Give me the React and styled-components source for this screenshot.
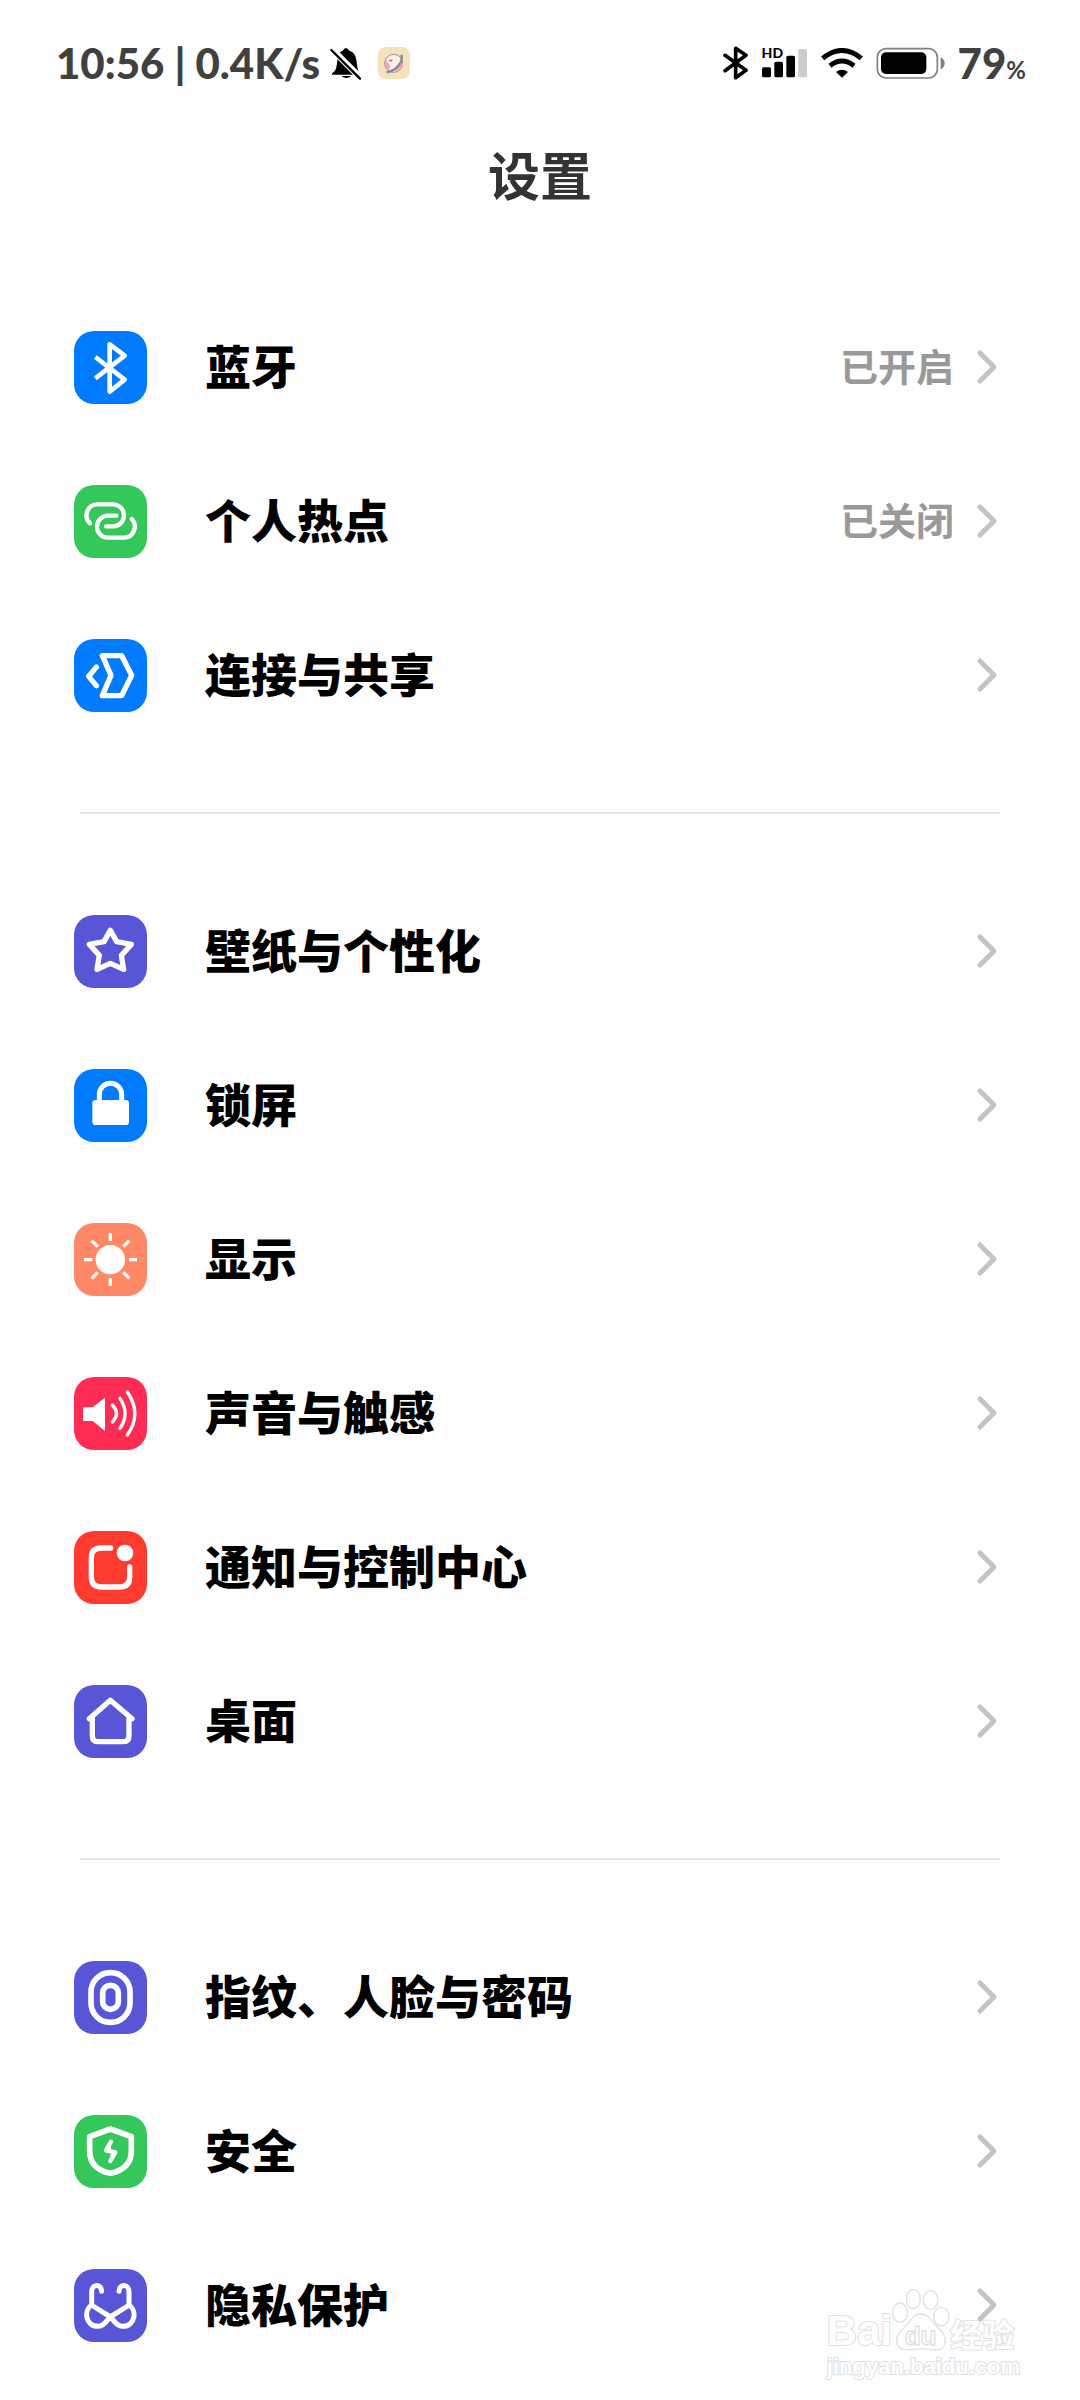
import styled, { createGlobalStyle } from "styled-components";

//every tile glyph is drawn on a 219 x 219 grid
const ICONS = {
    bluetooth: (
        <path strokeWidth="14" d="M64 78 L152 146 L107 182 V40 L152 74 L64 142" />
    ),
    hotspot: (
        <g strokeWidth="13" strokeLinecap="round">
            <path d="M48 115 A33 33 0 0 1 68 58 H117 A33 33 0 0 1 117 124 H96" />
            <path d="M127 92 H102 A33 33 0 0 0 102 158 H150 A33 33 0 0 0 173 102" />
        </g>
    ),
    share: (
        <g strokeWidth="16" strokeLinecap="round">
            <path d="M85 50 H143 L173 109 L143 170 H85 L111 109 Z" />
            <path d="M67 84 L44 112 L67 140" />
        </g>
    ),
    star: (
        <path strokeWidth="16" d="M109 46 L128 80 L172 88 L142 121 L149 163 L109 145 L69 163 L76 121 L46 88 L90 80 Z" />
    ),
    lock: (
        <g>
            <rect x="55" y="93" width="110" height="75" rx="10" fill="#fff" stroke="none" />
            <path strokeWidth="15" d="M76 96 V76 A33 33 0 0 1 143 76 V96" />
        </g>
    ),
    sun: (
        <g strokeWidth="10">
            <circle cx="109" cy="110" r="44" fill="#fff" stroke="none" />
            <path d="M109 30 V54 M109 165 V189 M30 110 H55 M165 110 H189" />
            <path d="M53 53 L71 71 M166 53 L148 71 M53 166 L71 148 M166 166 L148 148" />
        </g>
    ),
    sound: (
        <g strokeWidth="10" strokeLinecap="round">
            <path fill="#fff" stroke="none" d="M31 91 H56 L93 62 V162 L56 132 H31 Q27 132 27 128 V95 Q27 91 31 91 Z" />
            <path d="M115 84 Q140 110 115 135 M138 64 Q168 110 138 154 M160 45 Q205 110 160 174" />
        </g>
    ),
    notification: (
        <g strokeWidth="16" strokeLinecap="round">
            <path d="M110 51 H82 Q52 51 52 80 V138 Q52 168 82 168 H137 Q167 168 167 138 V108" />
            <circle cx="153" cy="66" r="25" fill="#fff" stroke="none" />
        </g>
    ),
    home: (
        <g strokeWidth="16" strokeLinecap="round">
            <path d="M46 101 L109 46 L174 101" />
            <path d="M55 100 V152 Q55 170 73 170 H147 Q165 170 165 152 V100" />
        </g>
    ),
    fingerprint: (
        <g strokeWidth="17">
            <rect x="51" y="35" width="117" height="149" rx="58" />
            <rect x="86" y="73" width="47" height="72" rx="23" />
        </g>
    ),
    shield: (
        <g>
            <path strokeWidth="17" d="M109 42 L172 65 V108 C172 150 142 168 109 175 C76 168 47 150 47 108 V65 Z" />
            <path strokeWidth="13" strokeLinecap="round" fill="#fff" d="M111 80 L96 106 L124 112 L109 138" />
        </g>
    ),
    privacy: (
        <g strokeWidth="15" strokeLinecap="round">
            <path d="M83 67 C83 44 53 42 53 70 V108 C28 124 34 172 72 172 C94 172 98 150 113 141 L166 108" />
            <path d="M135 67 C135 44 165 42 165 70 V108 C190 124 184 172 146 172 C124 172 120 150 105 141 L52 108" />
        </g>
    ),
};

const GROUPS = [
    [
        { icon: "bluetooth", color: "#007aff", label: "蓝牙", value: "已开启" },
        { icon: "hotspot", color: "#34c759", label: "个人热点", value: "已关闭" },
        { icon: "share", color: "#007aff", label: "连接与共享" },
    ],
    [
        { icon: "star", color: "#5856d6", label: "壁纸与个性化" },
        { icon: "lock", color: "#007aff", label: "锁屏" },
        { icon: "sun", color: "#ff8966", label: "显示" },
        { icon: "sound", color: "#ff2d55", label: "声音与触感" },
        { icon: "notification", color: "#ff3b30", label: "通知与控制中心" },
        { icon: "home", color: "#5856d6", label: "桌面" },
    ],
    [
        { icon: "fingerprint", color: "#5856d6", label: "指纹、人脸与密码" },
        { icon: "shield", color: "#34c759", label: "安全" },
        { icon: "privacy", color: "#5856d6", label: "隐私保护" },
    ],
];

const StatusBar = () => {
    return (
        <Bar>
            <BarSide>
                <BarText>10:56 | 0.4K/s</BarText>
                <svg width="32" height="34" viewBox="0 0 96 102">
                    <path d="M15 74 C26 58 16 22 38 14 Q48 -2 58 14 C88 24 74 56 90 86 H6 Q4 82 15 74 Z M34 90 H64 Q50 102 34 90 Z" />
                    <path d="M2 6 L94 98" stroke="#fff" strokeWidth="19" />
                    <path d="M4 12 L90 98" stroke="#000" strokeWidth="7" strokeLinecap="round" />
                </svg>
                <AppBadge>
                    <svg width="32" height="32" viewBox="0 0 96 96">
                        <circle cx="47" cy="49" r="27" fill="#faf0e6" stroke="#a98890" strokeWidth="3" />
                        <path d="M23 38 L37 58 L32 70 Q18 60 23 38 Z M70 46 L75 50 Q72 68 56 72 L50 68 Z" fill="#f5a3ba" />
                        <path d="M26 76 Q54 72 68 46 Q74 32 70 23" fill="none" stroke="#85899c" strokeWidth="7" />
                        <path d="M34 39 Q38 45 43 38" fill="none" stroke="#b55a62" strokeWidth="4" />
                    </svg>
                </AppBadge>
            </BarSide>
            <BarSide $end>
                <svg width="26" height="34" viewBox="0 0 78 102">
                    <path d="M6 28 L69 73 L38 95 V7 L69 28 L6 74" fill="none" stroke="#000" strokeWidth="11" strokeLinejoin="round" strokeLinecap="round" />
                </svg>
                <Signal>
                    <HdMark>HD</HdMark>
                    <svg width="46" height="30" viewBox="0 0 138 90">
                        <rect x="0" y="58" width="27" height="30" rx="5" />
                        <rect x="37" y="41" width="26" height="47" rx="5" />
                        <rect x="73" y="23" width="26" height="65" rx="5" />
                        <rect x="109" y="3" width="26" height="85" rx="5" fill="#ccc" />
                    </svg>
                </Signal>
                <svg width="42" height="30" viewBox="0 0 126 90">
                    <g fill="none" stroke="#000" strokeWidth="15">
                        <path d="M5 31 Q63 -16 121 31" />
                        <path d="M27 53 Q63 25 99 53" />
                    </g>
                    <path d="M45 72 Q63 58 81 72 L63 89 Z" />
                </svg>
                <svg width="69" height="32" viewBox="0 0 207 96">
                    <rect x="4" y="5" width="180" height="88" rx="26" fill="none" stroke="#808080" strokeWidth="5" />
                    <rect x="15" y="16" width="136" height="65" rx="15" />
                    <path d="M194 30 Q206 38 206 49 Q206 60 194 68 Z" fill="#808080" />
                </svg>
                <BarText>79<Percent>%</Percent></BarText>
            </BarSide>
        </Bar>
    );
};

const SettingRow = ({ item }) => {
    return (
        <li>
            <RowLink href={"#" + item.icon}>
                <Tile $color={item.color} viewBox="0 0 219 219">
                    {ICONS[item.icon]}
                </Tile>
                <Label>{item.label}</Label>
                {item.value && <Value>{item.value}</Value>}
                <svg width="22" height="36" viewBox="0 0 22 36">
                    <path d="M4 4 L18 18 L4 32" fill="none" stroke="#c4c4c6" strokeWidth="5" strokeLinecap="round" strokeLinejoin="round" />
                </svg>
            </RowLink>
        </li>
    );
};

const Watermark = () => {
    return (
        <Mark>
            <MarkRow>
                <MarkText $size={42}>Bai</MarkText>
                <svg width="58" height="64" viewBox="0 0 174 192">
                    <g fill="#fff" stroke="#dedede" strokeWidth="4">
                        <ellipse cx="24" cy="74" rx="22" ry="29" />
                        <ellipse cx="64" cy="33" rx="21" ry="29" />
                        <ellipse cx="116" cy="36" rx="22" ry="28" />
                        <ellipse cx="148" cy="86" rx="23" ry="28" />
                        <path d="M86 78 C112 78 118 102 138 120 C174 150 160 186 134 186 C112 186 108 182 86 182 C64 182 54 188 34 184 C8 178 6 146 34 122 C54 104 60 78 86 78 Z" />
                        <text x="38" y="171" fontSize="78" fontFamily="Liberation Sans" fontWeight="700">du</text>
                    </g>
                </svg>
                <MarkText $size={32}>经验</MarkText>
            </MarkRow>
            <MarkText $size={22}>jingyan.baidu.com</MarkText>
        </Mark>
    );
};

const App = () => {
    return (
        <Page>
            <GlobalStyle />
            <StatusBar />
            <Title>设置</Title>
            <main>
                {GROUPS.map((group, index) => {
                    return (
                        <Group key={index}>
                            {group.map((item) => {
                                return <SettingRow key={item.icon} item={item} />;
                            })}
                        </Group>
                    );
                })}
            </main>
            <Watermark />
        </Page>
    );
};

const GlobalStyle = createGlobalStyle`
    * {
        box-sizing: border-box;
    }
    body {
        margin: 0;
        background-color: #fefefe;
        font-family: "Noto Sans CJK SC", sans-serif;
    }
`;

const Page = styled.div`
    position: relative;
    min-height: 100vh;
    padding-bottom: 18px;
`;

const Bar = styled.header`
    display: flex;
    justify-content: space-between;
    align-items: center;
    height: 126px;
    padding: 0 54px 0 56px;
`;

const BarSide = styled.div`
    display: flex;
    align-items: center;
    gap: ${(props) => (props.$end ? "13px" : "10px")};
`;

const BarText = styled.span`
    font-family: Lato, sans-serif;
    font-size: 42px;
    font-weight: 900;
    line-height: 48px;
    color: #404040;
    white-space: pre;
`;

const Percent = styled.small`
    font-size: 24px;
    font-weight: 700;
    line-height: 24px;
`;

const AppBadge = styled.span`
    display: flex;
    margin-left: 6px;
    border-radius: 8px;
    background-color: #f2e3bb;
`;

const Signal = styled.span`
    position: relative;
    display: flex;
`;

const HdMark = styled.span`
    position: absolute;
    top: -2px;
    left: 0;
    font-family: Lato, sans-serif;
    font-size: 14px;
    font-weight: 900;
    line-height: 14px;
    color: #000;
`;

const Title = styled.h1`
    margin: 0 0 68px;
    font-size: 52px;
    font-weight: 700;
    line-height: 96px;
    text-align: center;
    color: #333;
`;

const Group = styled.ul`
    margin: 0;
    padding: 0;
    list-style: none;
    & + &::before {
        content: "";
        display: block;
        height: 2px;
        margin: 60px 80px;
        background-color: #e4e4e4;
    }
`;

const RowLink = styled.a`
    display: flex;
    align-items: center;
    height: 154px;
    padding: 0 82px 0 74px;
    color: #000;
    text-decoration: none;
`;

const Tile = styled.svg`
    flex: none;
    width: 73px;
    height: 73px;
    margin-right: 58px;
    border-radius: 20px;
    background-color: ${(props) => props.$color};
    fill: none;
    stroke: #fff;
    stroke-linejoin: round;
`;

const Label = styled.span`
    flex: 1;
    padding-bottom: 6px;
    font-size: 46px;
    font-weight: 900;
    line-height: 64px;
`;

const Value = styled.span`
    margin-right: 22px;
    padding-bottom: 4px;
    font-size: 38px;
    font-weight: 700;
    line-height: 64px;
    color: #999;
`;

const Mark = styled.div`
    position: absolute;
    right: 60px;
    bottom: 22px;
    opacity: 0.9;
    pointer-events: none;
`;

const MarkRow = styled.div`
    display: flex;
    align-items: flex-end;
    margin-bottom: 4px;
`;

const MarkText = styled.span`
    display: block;
    font-family: "Liberation Sans", "Noto Sans CJK SC", sans-serif;
    font-size: ${(props) => props.$size}px;
    font-weight: 700;
    line-height: ${(props) => props.$size}px;
    color: #fff;
    -webkit-text-stroke: 2px #dedede;
    paint-order: stroke fill;
`;

export default App;
